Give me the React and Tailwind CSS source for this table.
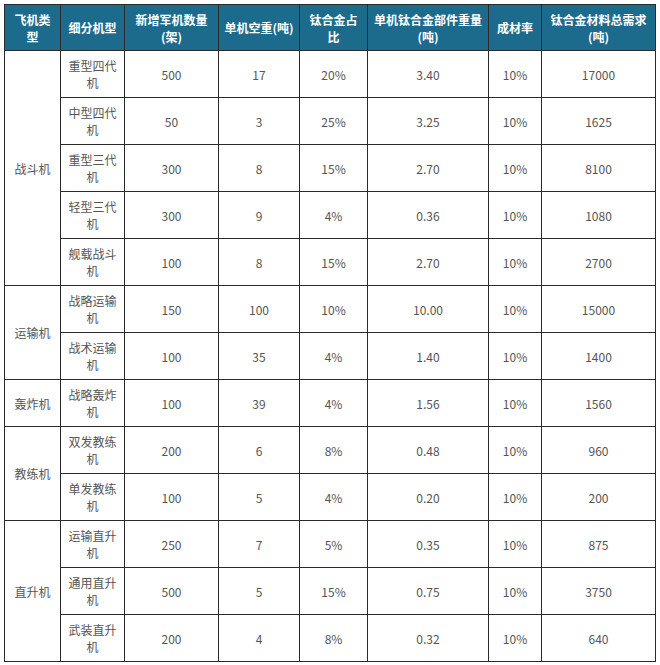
import React from "react";

const groups = [
  {
    name: "战斗机",
    rows: [
      ["重型四代机", "500", "17", "20%", "3.40", "10%", "17000"],
      ["中型四代机", "50", "3", "25%", "3.25", "10%", "1625"],
      ["重型三代机", "300", "8", "15%", "2.70", "10%", "8100"],
      ["轻型三代机", "300", "9", "4%", "0.36", "10%", "1080"],
      ["舰载战斗机", "100", "8", "15%", "2.70", "10%", "2700"],
    ],
  },
  {
    name: "运输机",
    rows: [
      ["战略运输机", "150", "100", "10%", "10.00", "10%", "15000"],
      ["战术运输机", "100", "35", "4%", "1.40", "10%", "1400"],
    ],
  },
  {
    name: "轰炸机",
    rows: [["战略轰炸机", "100", "39", "4%", "1.56", "10%", "1560"]],
  },
  {
    name: "教练机",
    rows: [
      ["双发教练机", "200", "6", "8%", "0.48", "10%", "960"],
      ["单发教练机", "100", "5", "4%", "0.20", "10%", "200"],
    ],
  },
  {
    name: "直升机",
    rows: [
      ["运输直升机", "250", "7", "5%", "0.35", "10%", "875"],
      ["通用直升机", "500", "5", "15%", "0.75", "10%", "3750"],
      ["武装直升机", "200", "4", "8%", "0.32", "10%", "640"],
    ],
  },
];

const heads = [
  "飞机类型",
  "细分机型",
  "新增军机数量(架)",
  "单机空重(吨)",
  "钛合金占比",
  "单机钛合金部件重量(吨)",
  "成材率",
  "钛合金材料总需求(吨)",
];

const widths = [56, 64, 94, 81, 68, 121, 53, 114];

function App() {
  return (
    <div className="bg-white w-[660px] h-[665px] pt-[4px] pl-[4px]" style={{ fontFamily: '"Noto Sans CJK SC", "Open Sans", sans-serif' }}>
      <table className="table-fixed border-collapse w-[651px] text-[12px] leading-[17px]">
        <colgroup>
          {widths.map((w, i) => (
            <col key={i} style={{ width: w }} />
          ))}
        </colgroup>
        <thead>
          <tr className="h-[46px] bg-[#1d6b8c]">
            {heads.map((h, i) => (
              <th key={i} className="border border-[#2a2a2a] px-[5px] text-white font-bold text-center align-middle">
                {h}
              </th>
            ))}
          </tr>
        </thead>
        <tbody>
          {groups.map((g) =>
            g.rows.map((r, j) => (
              <tr key={g.name + j} className="h-[47px]">
                {j === 0 && (
                  <td rowSpan={g.rows.length} className="border border-[#2a2a2a] px-[5px] text-center align-middle text-[#555]">
                    {g.name}
                  </td>
                )}
                {r.map((c, k) => (
                  <td key={k} className="border border-[#2a2a2a] px-[5px] text-center align-middle text-[#555]">
                    {c}
                  </td>
                ))}
              </tr>
            ))
          )}
        </tbody>
      </table>
    </div>
  );
}

export default App;
